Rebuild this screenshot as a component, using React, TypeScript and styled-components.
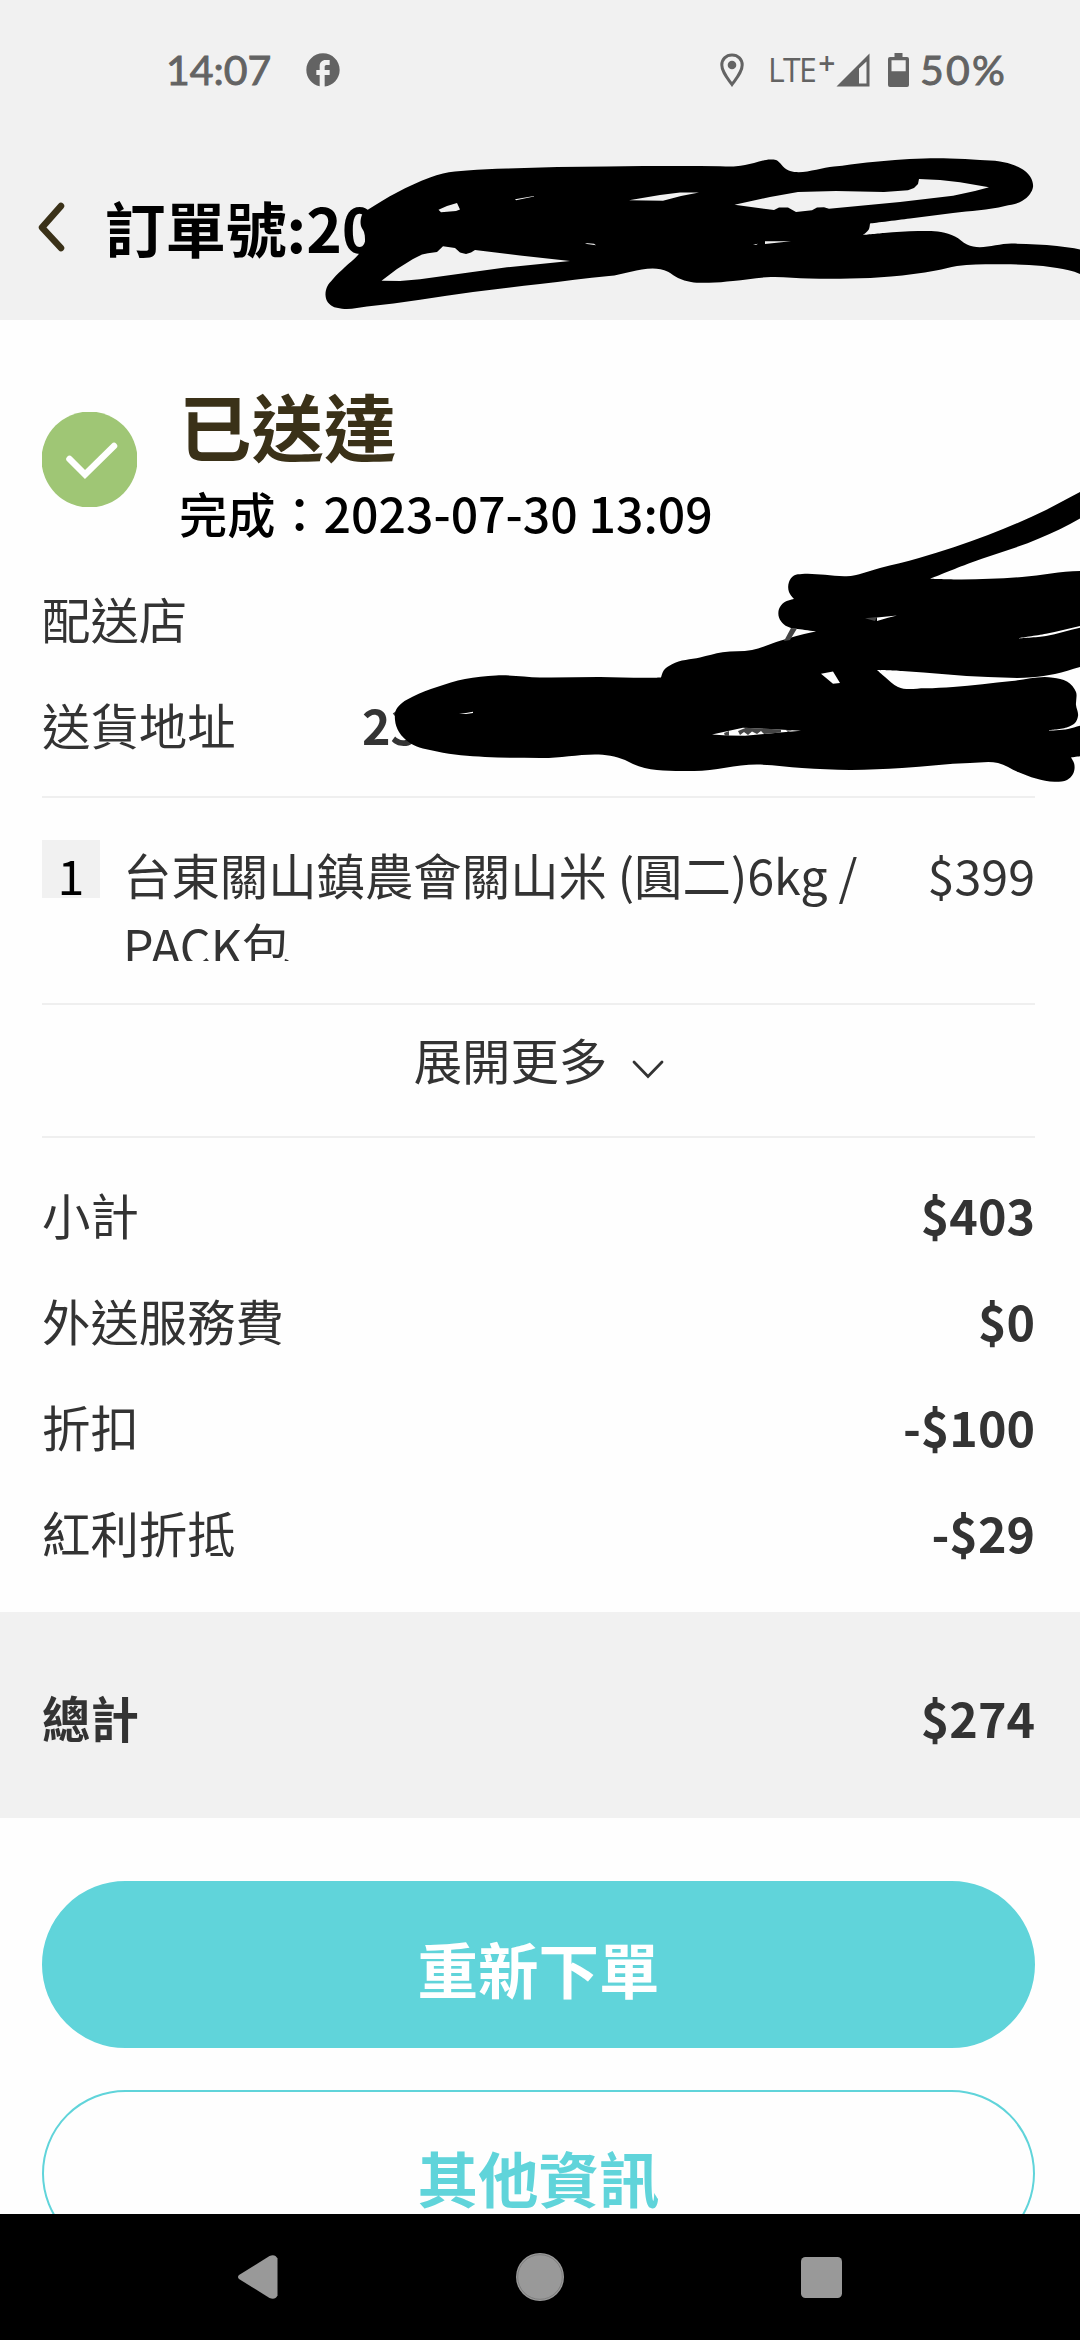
import React from 'react';
import styled, { createGlobalStyle } from 'styled-components';
import { MdFacebook } from 'react-icons/md';

const GlobalStyle = createGlobalStyle`
  * { box-sizing: border-box; }
  body { margin: 0; background: #fff; }
`;

const Screen = styled.div`
  position: relative;
  width: 1080px;
  height: 2340px;
  display: flex;
  flex-direction: column;
  overflow: hidden;
  background: #fefefe;
  color: #333;
  font-family: 'Noto Sans CJK TC', sans-serif;
  font-size: 48.4px;
`;

const StatusBar = styled.header`
  height: 134px;
  flex: none;
  display: flex;
  align-items: center;
  justify-content: space-between;
  padding: 5px 73px 0 166px;
  background: #f1f1f1;
  color: #636363;
  font-family: Lato, sans-serif;
`;

const StatusGroup = styled.div`
  display: flex;
  align-items: center;
  svg { display: block; flex: none; }
`;

const StatusText = styled.span<{ $spacing: number }>`
  font-size: 41px;
  line-height: 48px;
  font-weight: 400;
  letter-spacing: ${(p) => p.$spacing}px;
  -webkit-text-stroke: 0.9px currentColor;
`;

const FacebookIcon = styled(MdFacebook)`
  margin-left: 32px;
  width: 40px;
  height: 40px;
`;

const PinIcon = styled.svg`
  margin-right: 23px;
`;

const Network = styled.span`
  display: flex;
  width: 64px;
  margin-right: 4px;
  font-family: 'Open Sans', sans-serif;
  font-size: 32px;
  line-height: 40px;
  letter-spacing: -1.6px;
`;

const NetworkPlus = styled.sup`
  margin-left: 3px;
  font-size: 30px;
  line-height: 26px;
  font-weight: 600;
`;

const SignalIcon = styled.svg`
  margin-right: 18px;
`;

const BatteryIcon = styled.svg`
  margin-right: 11px;
`;

const TitleBar = styled.div`
  height: 186px;
  flex: none;
  display: flex;
  align-items: center;
  gap: 39px;
  padding-left: 38px;
  background: #f1f1f1;
`;

const Title = styled.h1`
  margin: 0;
  color: #000;
  font-size: 60.5px;
  line-height: 88px;
  font-weight: 700;
`;

const Body = styled.main`
  flex: 1;
  min-height: 0;
  overflow: hidden;
`;

const Section = styled.section<{ $top?: number; $bottom?: number }>`
  margin: 0 45px 0 42px;
  padding: ${(p) => p.$top ?? 0}px 0 ${(p) => p.$bottom ?? 0}px;
  border-bottom: 2px solid #efefef;
  &:last-of-type { border-bottom: 0; }
`;

const Delivery = styled.div`
  display: flex;
  align-items: center;
  gap: 42px;
  padding-bottom: 9px;
  svg { display: block; margin-top: -17px; }
`;

const DeliveryState = styled.h2`
  margin: 0;
  color: #3a3118;
  font-size: 72.4px;
  line-height: 90px;
  height: 88px;
  font-weight: 700;
`;

const DeliveryTime = styled.p`
  margin: 0;
  color: #000;
  font-size: 48.2px;
  line-height: 88px;
  font-weight: 500;
`;

const InfoRow = styled.div`
  height: 106px;
  display: grid;
  grid-template-columns: 320px 1fr;
  align-items: center;
  line-height: 72px;
`;

const Label = styled.span<{ $bold?: boolean }>`
  font-weight: ${(p) => (p.$bold ? 700 : 400)};
`;

const Value = styled.strong`
  font-weight: 700;
`;

const Item = styled.div`
  display: flex;
  height: 121px;
  overflow: hidden;
  line-height: 69.5px;
  font-weight: 400;
`;

const Quantity = styled.span`
  width: 58px;
  height: 58px;
  margin-right: 23px;
  background: #f1f1f1;
  color: #000;
  text-align: center;
  line-height: 69px;
  font-weight: 400;
`;

const ItemName = styled.span`
  width: 760px;
`;

const Price = styled.span`
  margin-left: auto;
`;

const Expand = styled.button`
  width: 100%;
  height: 131px;
  display: flex;
  justify-content: center;
  gap: 24px;
  padding: 18px 0 0 2px;
  border: 0;
  background: none;
  color: inherit;
  font: inherit;
  font-weight: 400;
  line-height: 72px;
  svg { margin-top: 36px; }
`;

const AmountRow = styled.div`
  height: 106px;
  display: flex;
  align-items: center;
  justify-content: space-between;
  line-height: 72px;
`;

const Total = styled(AmountRow)`
  height: 206px;
  padding: 3px 45px 0 42px;
  background: #f1f1f1;
`;

const Actions = styled.div`
  display: flex;
  flex-direction: column;
  gap: 42px;
  padding: 63px 45px 0 42px;
`;

const Action = styled.button<{ $outline?: boolean }>`
  height: 167px;
  flex: none;
  padding: 6px 0 0;
  border: 2px solid #60d4da;
  border-radius: 84px;
  background: ${(p) => (p.$outline ? '#fefefe' : '#60d4da')};
  color: ${(p) => (p.$outline ? '#60d4da' : '#fff')};
  font: inherit;
  font-size: 60.5px;
  line-height: 88px;
  font-weight: 700;
`;

const NavBar = styled.nav`
  height: 126px;
  flex: none;
  display: flex;
  align-items: center;
  justify-content: space-between;
  padding: 0 238px 0 237px;
  background: #000;
`;

const Scribbles = styled.svg`
  position: absolute;
  left: 0;
  top: 0;
  pointer-events: none;
`;

const amounts = [
  { label: '小計', value: '$403' },
  { label: '外送服務費', value: '$0' },
  { label: '折扣', value: '-$100' },
  { label: '紅利折抵', value: '-$29' },
];

type Point = [number, number];

/* Closed smooth outline through every point; sharp turns stay as corners. */
const blob = (pts: Point[]) => {
  const n = pts.length;
  const at = (i: number) => pts[(i + n) % n];
  const tangent = (i: number): Point => {
    const [a, b, c] = [at(i - 1), at(i), at(i + 1)];
    const u = Math.hypot(b[0] - a[0], b[1] - a[1]);
    const v = Math.hypot(c[0] - b[0], c[1] - b[1]);
    const p: Point = [(b[0] - a[0]) / u, (b[1] - a[1]) / u];
    const q: Point = [(c[0] - b[0]) / v, (c[1] - b[1]) / v];
    if (p[0] * q[0] + p[1] * q[1] < 0.6) return [0, 0];
    const t: Point = [p[0] * v + q[0] * u, p[1] * v + q[1] * u];
    const l = Math.hypot(t[0], t[1]);
    return [t[0] / l, t[1] / l];
  };
  let d = `M${pts[0][0]} ${pts[0][1]}`;
  for (let i = 0; i < n; i++) {
    const [a, b] = [at(i), at(i + 1)];
    const [s, t] = [tangent(i), tangent(i + 1)];
    const k = Math.hypot(b[0] - a[0], b[1] - a[1]) / 3;
    d += `C${a[0] + s[0] * k} ${a[1] + s[1] * k} ${b[0] - t[0] * k} ${b[1] - t[1] * k} ${b[0]} ${b[1]}`;
  }
  return d + 'Z';
};

const poly = (pts: Point[]) => 'M' + pts.map((p) => p.join(' ')).join('L') + 'Z';

const titleMark: Point[] = [
  [325.5, 295], [327, 287], [333, 279], [345, 267], [358, 255], [364, 247], [365, 240], [364, 232], [361, 226], [361, 218], [363, 213], [369, 209],
  [397, 192.5], [430, 177.5], [443, 173.5], [467, 170.5], [507, 168.5], [607, 166.5], [720, 166.2], [736, 166.3], [754, 163], [771, 159.5], [776, 160], [780, 163], [783, 166.5],
  [834, 166.5], [867, 162.5], [895, 160], [924, 158.5], [950, 158.5], [980, 160], [1000, 161.5], [1015, 165.5], [1025, 171], [1031, 178], [1033, 187], [1030, 194], [1022, 201],
  [1005, 206], [953, 213], [910, 218.5], [870, 223.5], [869, 229], [863, 235], [884, 233], [919, 231], [941, 232], [955, 236.5], [967, 244.6],
  [1012, 243.6], [1057, 246], [1080, 249.5], [1082, 250], [1082, 275], [1080, 274], [1057, 268], [1029, 265], [995, 264.3], [957, 266], [936, 270.5], [891, 276.5],
  [850, 278.6], [809, 278.6], [771, 277], [733, 281], [709, 282.8], [691, 282], [678, 278], [668, 271.7], [609, 276], [540, 284], [473, 292], [367, 306.5], [342, 308.7], [332, 306], [327, 301],
];

const titleGaps: Point[][] = [
  [[438.5, 209.8], [447, 206], [457, 203], [460, 209.5], [456, 211], [441, 212.3]],
  [[515, 199.3], [534, 196], [534, 196.6], [516, 200.3]],
  [[629, 200.3], [660, 195], [680, 192.6], [699, 192.6], [681, 196], [663, 200.8]],
  [[381.5, 280.8], [397, 269], [413, 259], [422, 254.5], [428, 253.3], [437, 252], [443, 246.3], [455, 248], [460, 252.5], [466, 254], [471, 252.5], [475, 250], [520, 255.5], [570, 261], [507, 267.3], [420, 279.3], [400, 281]],
  [[585, 243], [594, 243.8], [596, 245.2], [587, 244]],
  [[765, 241.3], [791, 241.3], [779, 242.4], [765, 244]],
  [[753, 244.8], [758, 243.8], [756, 245]],
  [[734.5, 204.7], [774, 210], [779, 207.5], [788, 207.5], [796, 212], [812, 210.3], [817, 207.5], [824, 207.3], [829, 208.8], [900, 202], [953, 195.7], [975, 191], [989, 187.3], [960, 182.3], [940, 180], [919, 179], [918, 184], [914, 188], [908, 190.3], [884, 192], [836, 191], [798, 192], [770, 197]],
];

const addressMark: Point[] = [
  [395, 720], [396, 710], [402, 703], [413, 696.5], [437, 687], [465, 679], [496, 675.5], [540, 677.5], [600, 677], [655, 677.7], [661, 677.5], [664, 670], [672, 664.3], [700, 657.5],
  [722.5, 652.3], [752, 650], [781, 640.5], [812, 632.3], [816.5, 631.5], [800, 629.3], [791, 628], [784, 624.5], [779, 617.5], [779, 609], [784, 602.5], [794, 599],
  [789, 592], [789, 582], [794, 575.5], [802, 574], [825, 574.8], [846.5, 576.3], [880, 568], [919, 558], [988, 535], [1046, 510], [1080, 492], [1084, 490], [1084, 516], [1080, 518.5], [1039, 538.5],
  [970, 563], [930, 578.8], [960, 579.5], [1022, 577], [1080, 571], [1084, 571], [1084, 625], [1080, 626], [1046, 633.7], [1019, 638], [1019, 638.4], [1046, 636], [1080, 627.8], [1084, 627],
  [1084, 666], [1080, 667], [1055, 674], [1032, 677.3], [988, 677], [902, 671], [877, 670], [885, 677], [898, 687], [925, 688.3], [953, 687], [1012, 681], [1053, 677.7], [1067, 681.5],
  [1076, 692], [1076, 705], [1078, 716], [1075, 723], [1068, 727], [1049, 730], [1049, 730.6], [1068, 729], [1080, 725.8], [1084, 725], [1084, 756], [1080, 756.3], [1071, 757.5], [1074, 763], [1073, 774],
  [1067, 780], [1056, 781.8], [1036, 778.5], [1018, 772], [998, 763], [970, 763], [902, 768], [850, 770], [802, 768], [757, 764.6], [693, 771], [633, 764], [625, 760], [540, 758], [485, 757], [437, 751.5], [410, 743], [399, 732],
];

const addressGaps: Point[][] = [
  [[821, 673.7], [833, 671.5], [840, 683], [833, 683.7]],
  [[877, 617.5], [897, 615.6], [888, 617.8], [877, 621]],
  [[712, 734.5], [728, 731], [743, 727.8], [770, 729], [801, 730.7], [780, 732.5], [745, 735.8], [727, 735.5]],
  [[459, 714], [466, 713], [473, 711.8], [473, 713], [466, 714]],
];

const addressRemnants: Point[][] = [
  [[791, 628], [797, 628.5], [790, 640], [784, 641]],
  [[865, 618.3], [877, 617], [875, 621]],
  [[724, 733], [729, 731], [729, 736], [725, 736]],
  [[738, 731], [746, 727.8], [781, 729.5], [781, 732.5], [764, 734], [761, 731], [757, 734], [752, 731.5], [748, 735], [744, 732], [740, 735]],
  [[786, 730.2], [792, 730.4], [788, 732]],
];

export default function App() {
  return (
    <>
      <GlobalStyle />
      <Screen>
        <StatusBar>
          <StatusGroup>
            <StatusText $spacing={0}>14:07</StatusText>
            <FacebookIcon />
          </StatusGroup>
          <StatusGroup>
            <PinIcon width="26" height="34" viewBox="0 0 26 34">
              <path d="M13 2C6.9 2 2.8 6.4 2.8 12c0 6.7 5.2 12.5 10.2 19.5C18 24.5 23.2 18.7 23.2 12 23.2 6.4 19.1 2 13 2Z" fill="none" stroke="currentColor" strokeWidth="3" />
              <circle cx="13" cy="12" r="4.3" fill="currentColor" />
            </PinIcon>
            <Network>
              LTE<NetworkPlus>+</NetworkPlus>
            </Network>
            <SignalIcon width="34" height="34" viewBox="0 0 34 34">
              <path fillRule="evenodd" fill="currentColor" d="M33.5 0.5V33.5H0.5ZM30.5 8.5 23 15.5V30.5H30.5Z" />
            </SignalIcon>
            <BatteryIcon width="21" height="34" viewBox="0 0 21 34">
              <path fillRule="evenodd" fill="currentColor" d="M6.5 0h8v4H19q2 0 2 2V32q0 2-2 2H2q-2 0-2-2V6q0-2 2-2H6.5ZM3.5 7.3V18.3H17.7V7.3Z" />
            </BatteryIcon>
            <StatusText $spacing={2.2}>50%</StatusText>
          </StatusGroup>
        </StatusBar>
        <TitleBar>
          <svg width="28" height="50" viewBox="0 0 28 50">
            <path d="M23 4 4 25.5 23 46" fill="none" stroke="#3a3118" strokeWidth="6.5" strokeLinecap="round" strokeLinejoin="round" />
          </svg>
          <Title>訂單號:20</Title>
        </TitleBar>

        <Body>
          <Section $top={60} $bottom={19}>
            <Delivery>
              <svg width="95" height="95" viewBox="0 0 95 95">
                <circle cx="47.5" cy="47.5" r="48" fill="#9fc675" />
                <path d="M27.5 47 43 62.5 72 34" fill="none" stroke="#fff" strokeWidth="6.5" strokeLinecap="round" />
              </svg>
              <div>
                <DeliveryState>已送達</DeliveryState>
                <DeliveryTime>完成：2023-07-30 13:09</DeliveryTime>
              </div>
            </Delivery>
            <InfoRow>
              <Label>配送店</Label>
            </InfoRow>
            <InfoRow>
              <Label>送貨地址</Label>
              <Value>23</Value>
            </InfoRow>
          </Section>
          <Section $top={42} $bottom={42}>
            <Item>
              <Quantity>1</Quantity>
              <ItemName>台東關山鎮農會關山米 (圓二)6kg / PACK包</ItemName>
              <Price>$399</Price>
            </Item>
          </Section>
          <Section>
            <Expand>
              展開更多
              <svg width="34" height="22" viewBox="0 0 34 22">
                <path d="M3 3 17 17.5 31 3" fill="none" stroke="#333" strokeWidth="2.8" strokeLinecap="round" />
              </svg>
            </Expand>
          </Section>
          <Section $top={23} $bottom={27}>
            {amounts.map((a) => (
              <AmountRow key={a.label}>
                <Label>{a.label}</Label>
                <Value>{a.value}</Value>
              </AmountRow>
            ))}
          </Section>
          <Total>
            <Label $bold>總計</Label>
            <Value>$274</Value>
          </Total>
          <Actions>
            <Action>重新下單</Action>
            <Action $outline>其他資訊</Action>
          </Actions>
        </Body>

        <NavBar>
          <svg width="41" height="46" viewBox="0 0 41 46">
            <path d="M2 21 32.5 2Q38 -0.500 40.500 4.500V41.500Q38 46.500 32.500 44L2 25Q0 23 2 21Z" fill="#999" />
          </svg>
          <svg width="48" height="48" viewBox="0 0 48 48">
            <circle cx="24" cy="24" r="24" fill="#999" />
            <circle cx="24" cy="24" r="22.3" fill="none" stroke="#777" strokeWidth="0.8" />
          </svg>
          <svg width="41" height="41" viewBox="0 0 41 41">
            <rect width="41" height="41" rx="4.5" fill="#999" />
          </svg>
        </NavBar>

        <Scribbles width="1080" height="800" viewBox="0 0 1080 800">
          <path fillRule="evenodd" d={blob(titleMark) + titleGaps.map(poly).join('')} />
          <path fillRule="evenodd" d={blob(addressMark) + addressGaps.map(poly).join('')} />
          <path fill="#444" d={addressRemnants.map(poly).join('')} />
        </Scribbles>
      </Screen>
    </>
  );
}
